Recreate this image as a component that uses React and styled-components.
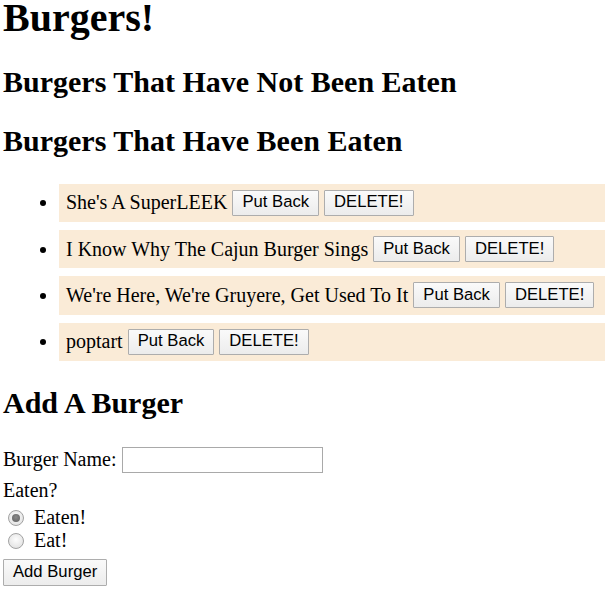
import React from "react";
import styled, { createGlobalStyle } from "styled-components";

const burgers = [
  "She's A SuperLEEK",
  "I Know Why The Cajun Burger Sings",
  "We're Here, We're Gruyere, Get Used To It",
  "poptart",
];

export default function App() {
  return (
    <>
      <GlobalStyle />
      <StyledPage>
        <StyledTitle>Burgers!</StyledTitle>
        <StyledHeading>Burgers That Have Not Been Eaten</StyledHeading>
        <StyledHeading>Burgers That Have Been Eaten</StyledHeading>
        <StyledList>
          {burgers.map((name) => (
            <StyledItem key={name}>
              <StyledItemRow>
                <span>{name}</span>
                <StyledButton type="button">Put Back</StyledButton>
                <StyledButton type="button">DELETE!</StyledButton>
              </StyledItemRow>
            </StyledItem>
          ))}
        </StyledList>
        <StyledHeading>Add A Burger</StyledHeading>
        <StyledForm onSubmit={(e) => e.preventDefault()}>
          <StyledNameRow>
            <StyledLabel htmlFor="burger-name">Burger Name:</StyledLabel>
            <StyledInput id="burger-name" type="text" />
          </StyledNameRow>
          <StyledLine>Eaten?</StyledLine>
          <StyledRadioRow>
            <StyledRadio type="radio" name="eaten" defaultChecked />
            <span>Eaten!</span>
          </StyledRadioRow>
          <StyledRadioRow>
            <StyledRadio type="radio" name="eaten" />
            <span>Eat!</span>
          </StyledRadioRow>
          <StyledSubmit type="submit">Add Burger</StyledSubmit>
        </StyledForm>
      </StyledPage>
    </>
  );
}

const GlobalStyle = createGlobalStyle`
  body {
    margin: 0;
    background: #ffffff;
    color: #000000;
    font-family: "Liberation Serif", "Times New Roman", serif;
    font-size: 20px;
    line-height: 1.15;
  }
`;

const StyledPage = styled.div`
  padding-left: 3px;
`;

// the shot is scrolled a little, so the title sits tight to the top
const StyledTitle = styled.h1`
  font-size: 40px;
  font-weight: bold;
  line-height: 0.9;
  margin: 0 0 28.6px;
`;

const StyledHeading = styled.h2`
  font-size: 30px;
  font-weight: bold;
  margin: 25px 0;
`;

const StyledList = styled.ul`
  margin: 25px 0;
  padding-left: 56px;
`;

const StyledItem = styled.li`
  background-color: #faebd7;
  padding: 6px 7px;
  & + & {
    margin-top: 8px;
  }
`;

const StyledItemRow = styled.div`
  display: flex;
  align-items: center;
  gap: 5px;
  height: 26.33px;
  white-space: nowrap;
`;

const StyledButton = styled.button`
  box-sizing: border-box;
  height: 26px;
  padding: 0 9px;
  font-family: "Liberation Sans", Arial, sans-serif;
  font-size: 16.67px;
  color: #000000;
  background: linear-gradient(#fafafa, #ececec);
  border: 1px solid #adadad;
  border-radius: 1px;
  line-height: 1;
`;

const StyledForm = styled.form`
  display: flex;
  flex-direction: column;
  align-items: flex-start;
`;

const StyledNameRow = styled.div`
  display: flex;
  align-items: flex-start;
  gap: 5px;
  height: 34px;
`;

const StyledLabel = styled.label`
  padding-top: 3px;
`;

const StyledInput = styled.input`
  box-sizing: border-box;
  width: 201px;
  height: 26px;
  margin: 2px 0 0;
  border: 1px solid #a9a9a9;
  padding: 1px 3px;
  font-family: "Liberation Sans", Arial, sans-serif;
  font-size: 16.67px;
`;

const StyledLine = styled.div`
  height: 23px;
  margin-bottom: 3.75px;
`;

const StyledRadioRow = styled.label`
  display: flex;
  align-items: center;
  height: 23px;
`;

const StyledRadio = styled.input`
  appearance: none;
  box-sizing: border-box;
  width: 16px;
  height: 16px;
  margin: 0 10px 0 5px;
  border-radius: 50%;
  border: 1px solid #a2a2a2;
  background: radial-gradient(circle at 50% 40%, #fdfdfd, #dcdcdc);
  display: grid;
  place-items: center;
  &:checked::after {
    content: "";
    width: 8px;
    height: 8px;
    border-radius: 50%;
    background: radial-gradient(circle at 50% 40%, #8a8a8a, #5f5f5f);
  }
`;

const StyledSubmit = styled(StyledButton)`
  height: 27px;
  margin-top: 7px;
`;
